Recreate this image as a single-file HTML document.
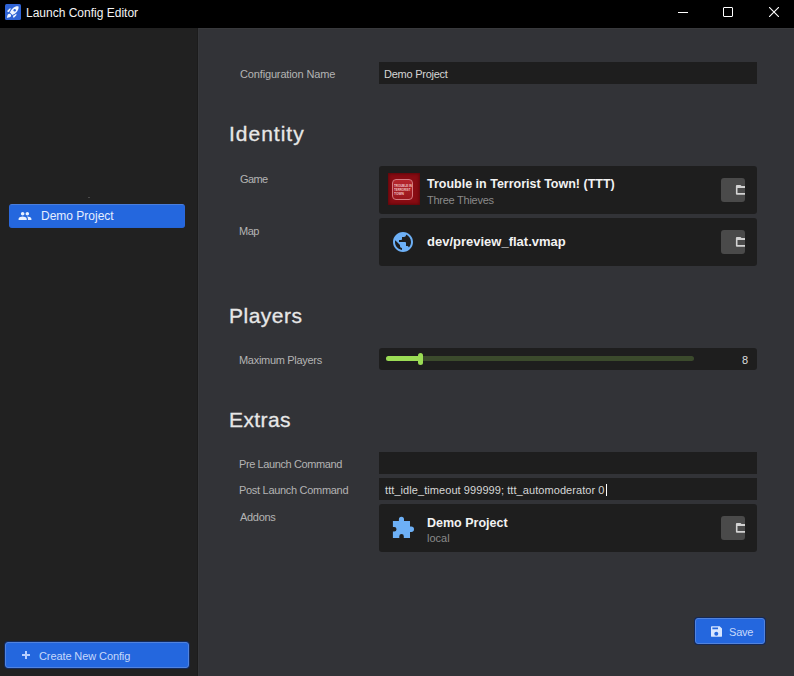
<!DOCTYPE html>
<html><head><meta charset="utf-8">
<style>
*{box-sizing:border-box;margin:0;padding:0}
html,body{width:794px;height:676px;overflow:hidden;background:#323337;font-family:"Liberation Sans",sans-serif}
.abs{position:absolute}
#title{left:0;top:0;width:794px;height:28px;background:#000}
#title .t{left:26px;top:6px;font-size:12px;color:#f4f4f4;white-space:nowrap;line-height:14px}
#side{left:0;top:28px;width:198px;height:648px;background:#212121;border-right:1px solid #1c1c1c}
#main{left:198px;top:28px;width:596px;height:648px;background:#323337;border-top:1px solid #38393c;border-left:1px solid #36373a}
.lbl{font-size:11px;color:#b4b4b4;white-space:nowrap;line-height:13px;letter-spacing:-0.3px}
.inp{left:379px;width:378px;height:22px;background:#1e1e1e}
.inp span{position:absolute;left:5px;top:6px;font-size:11px;line-height:13px;color:#d6d6d6;white-space:nowrap}
.h{font-size:21px;color:#e8e8e8;line-height:24px;white-space:nowrap;-webkit-text-stroke:0.3px #e6e6e6}
.card{left:379px;width:378px;height:48px;background:#1e1e1e;border-radius:3px}
.card .tt{position:absolute;left:48px;font-weight:bold;color:#f2f2f2;white-space:nowrap;font-size:12.5px;line-height:14px}
.card .st{position:absolute;left:48px;color:#8a8a8a;white-space:nowrap;font-size:11px;line-height:13px}
.fbtn{position:absolute;left:342px;width:24px;height:24px;background:#4a4a4a;border-radius:3px;overflow:hidden}
.btn{background:#2467de;border-radius:3px;box-shadow:0 0 0 1px #13295a;border:1px solid #5283dc}
</style></head><body>
<div id="title" class="abs">
  <svg class="abs" style="left:5px;top:4px" width="16" height="16" viewBox="0 0 16 16">
    <rect x="0" y="0" width="16" height="16" rx="1.5" fill="#2f63d4"/>
    <g transform="translate(0.7 0.8) scale(0.6)" fill="#eef5ff"><path d="M9.19,6.35c-2.04,2.290-3.44,5.580-3.57,5.890L2,10.690l4.050-4.050c0.470-0.470,1.150-0.680,1.810-0.550L9.190,6.350z M11.170,17c0,0,3.740-1.550,5.890-3.700c5.400-5.400,4.500-9.620,4.210-10.570c-0.950-0.300-5.170-1.190-10.570,4.210C8.550,9.090,7,12.830,7,12.830L11.170,17z M17.650,14.810c-2.290,2.040-5.580,3.440-5.890,3.570L13.310,22l4.050-4.050c0.470-0.470,0.680-1.150,0.550-1.810L17.650,14.810z M9,18c0,0.830-0.340,1.580-0.880,2.120C6.940,21.300,2,22,2,22s0.700-4.940,1.880-6.120C4.420,15.340,5.170,15,6,15C7.660,15,9,16.340,9,18z"/><circle cx="15" cy="9" r="2" fill="#2f63d4"/></g>
  </svg>
  <div class="abs t">Launch Config Editor</div>
  <div class="abs" style="left:678px;top:12px;width:10px;height:1px;background:#fff"></div>
  <div class="abs" style="left:723px;top:7px;width:10px;height:10px;border:1px solid #fff;border-radius:1px"></div>
  <svg class="abs" style="left:769px;top:7px" width="10" height="10" viewBox="0 0 10 10"><path d="M0 0 L10 10 M10 0 L0 10" stroke="#fff" stroke-width="1.1"/></svg>
</div>

<div id="side" class="abs">
  <div class="abs" style="left:88px;top:169px;width:2px;height:1px;background:#4a4a4a"></div>
  <div class="abs btn" style="left:9px;top:176px;width:176px;height:24px;box-shadow:none;border-color:#2d6ce0 #2a68dc #2565d8 #2a68dc;border-top-color:#4a7edc">
    <svg class="abs" style="left:8px;top:4px" width="14" height="14" viewBox="0 0 24 24"><g transform="translate(0 0) scale(1)"><path fill="#e8f0ff" d="M16 11c1.66 0 2.99-1.34 2.99-3S17.660 5 16 5c-1.660 0-3 1.340-3 3s1.340 3 3 3zm-8 0c1.660 0 2.990-1.340 2.990-3S9.660 5 8 5C6.340 5 5 6.340 5 8s1.340 3 3 3zm0 2c-2.330 0-7 1.170-7 3.500V19h14v-2.500c0-2.330-4.670-3.500-7-3.500zm8 0c-.290 0-.620.020-.970.050 1.160.840 1.970 1.970 1.970 3.450V19h6v-2.500c0-2.330-4.670-3.500-7-3.500z"/></g></svg>
    <div class="abs" style="left:31px;top:4px;font-size:12px;line-height:14px;color:#e6eeff;white-space:nowrap">Demo Project</div>
  </div>
  <div class="abs btn" style="left:5px;top:614px;width:184px;height:26px">
    <div class="abs" style="left:16px;top:8px;width:8px;height:8px">
      <div class="abs" style="left:3px;top:0;width:2px;height:8px;background:#b8d0ff"></div>
      <div class="abs" style="left:0;top:3px;width:8px;height:2px;background:#b8d0ff"></div>
    </div>
    <div class="abs" style="left:33px;top:7px;font-size:11px;line-height:13px;color:#c6d8fb;white-space:nowrap;letter-spacing:-0.1px">Create New Config</div>
  </div>
</div>

<div id="main" class="abs"></div>

<div class="abs lbl" style="left:240px;top:68px;letter-spacing:-0.15px">Configuration Name</div>
<div class="abs inp" style="top:62px"><span style="letter-spacing:-0.25px">Demo Project</span></div>

<div class="abs h" style="left:229px;top:122px;letter-spacing:1px">Identity</div>
<div class="abs lbl" style="left:240px;top:173px;letter-spacing:-0.6px">Game</div>
<div class="abs card" style="top:166px">
  <div class="abs" style="left:9px;top:7px;width:32px;height:32px;background:#880c13;box-shadow:inset 0 0 3px 1px #5e070b"></div>
  <div class="abs" style="left:13px;top:13px;width:21px;height:21px;background:linear-gradient(#b5262d,#9a161d);border:1px solid #d47a80;border-radius:4px"></div>
  <svg class="abs" style="left:15px;top:17px" width="19" height="14" viewBox="0 0 19 14" fill="#f0c4c6" font-family="Liberation Sans Narrow, Liberation Sans" font-weight="bold" font-size="4.4">
    <text x="0" y="4" textLength="18" lengthAdjust="spacingAndGlyphs">TROUBLE IN</text><text x="0" y="8.1" textLength="16.5" lengthAdjust="spacingAndGlyphs">TERRORIST</text><text x="0" y="12.2" textLength="10" lengthAdjust="spacingAndGlyphs">TOWN</text>
  </svg>
  <div class="tt" style="top:11px">Trouble in Terrorist Town! (TTT)</div>
  <div class="st" style="top:28px;letter-spacing:-0.25px">Three Thieves</div>
  <div class="fbtn" style="top:12px"><svg width="24" height="24" viewBox="0 0 24 24"><path fill="#d2d2d2" fill-rule="evenodd" d="M15.9 7 H19.5 L20.5 8.1 H26 V16.8 H15.9 Q14.9 16.8 14.9 15.8 V8 Q14.9 7 15.9 7 Z M16.5 10.1 H26 V14.9 H16.5 Z"/></svg></div>
</div>
<div class="abs lbl" style="left:239px;top:225px;letter-spacing:-0.5px">Map</div>
<div class="abs card" style="top:218px">
  <svg class="abs" style="left:12px;top:12px" width="24" height="24" viewBox="0 0 24 24"><path fill="#6db0f6" d="M12 2C6.48 2 2 6.48 2 12s4.48 10 10 10 10-4.48 10-10S17.52 2 12 2zm-1 17.93c-3.95-.49-7-3.85-7-7.93 0-.62.08-1.21.21-1.79L9 15v1c0 1.1.9 2 2 2v1.93zm6.9-2.54c-.26-.81-1-1.39-1.9-1.39h-1v-3c0-.55-.45-1-1-1H8v-2h2c.55 0 1-.45 1-1V7h2c1.1 0 2-.9 2-2v-.41c2.93 1.19 5 4.06 5 7.41 0 2.08-.8 3.97-2.1 5.39z"/></svg>
  <div class="tt" style="top:17px;font-size:13px">dev/preview_flat.vmap</div>
  <div class="fbtn" style="top:12px"><svg width="24" height="24" viewBox="0 0 24 24"><path fill="#d2d2d2" fill-rule="evenodd" d="M15.9 7 H19.5 L20.5 8.1 H26 V16.8 H15.9 Q14.9 16.8 14.9 15.8 V8 Q14.9 7 15.9 7 Z M16.5 10.1 H26 V14.9 H16.5 Z"/></svg></div>
</div>

<div class="abs h" style="left:229px;top:304px;letter-spacing:0.5px">Players</div>
<div class="abs lbl" style="left:239px;top:354px">Maximum Players</div>
<div class="abs inp" style="top:348px;border-radius:3px">
  <div class="abs" style="left:7px;top:8px;width:308px;height:5px;background:#3b4a2c;border-radius:3px"></div>
  <div class="abs" style="left:7px;top:8px;width:36px;height:5px;background:#9bdc55;border-radius:3px"></div>
  <div class="abs" style="left:39px;top:5px;width:5px;height:12px;background:#9bdc55;border-radius:2.5px"></div>
  <div class="abs" style="left:363px;top:6px;font-size:11px;line-height:13px;color:#dedede">8</div>
</div>

<div class="abs h" style="left:229px;top:408px;letter-spacing:0.4px">Extras</div>
<div class="abs lbl" style="left:239px;top:458px;letter-spacing:-0.4px">Pre Launch Command</div>
<div class="abs inp" style="top:452px"></div>
<div class="abs lbl" style="left:239px;top:484px">Post Launch Command</div>
<div class="abs inp" style="top:478px"><span style="left:6px;top:6px;letter-spacing:0.07px">ttt_idle_timeout 999999; ttt_automoderator 0</span><div class="abs" style="left:227px;top:6px;width:1px;height:12px;background:#fff"></div></div>
<div class="abs lbl" style="left:240px;top:511px">Addons</div>
<div class="abs card" style="top:504px">
  <svg class="abs" style="left:9px;top:8px" width="30" height="30" viewBox="0 0 30 30"><path fill="#6db0f6" d="M4.9 8.9 H10.9 V7.35 A2.55 2.55 0 0 1 16 7.35 V8.9 H22 V14.6 H23.3 A2.7 2.7 0 0 1 23.3 20 H22 V26 H15.8 V24.25 A2.25 2.25 0 0 0 11.3 24.25 V26 H4.9 V19.5 H6.25 A2.25 2.25 0 0 0 6.25 15 H4.9 Z"/></svg>
  <div class="tt" style="top:12px">Demo Project</div>
  <div class="st" style="top:28px">local</div>
  <div class="fbtn" style="top:12px"><svg width="24" height="24" viewBox="0 0 24 24"><path fill="#d2d2d2" fill-rule="evenodd" d="M15.9 7 H19.5 L20.5 8.1 H26 V16.8 H15.9 Q14.9 16.8 14.9 15.8 V8 Q14.9 7 15.9 7 Z M16.5 10.1 H26 V14.9 H16.5 Z"/></svg></div>
</div>

<div class="abs btn" style="left:695px;top:618px;width:70px;height:26px">
  <svg class="abs" style="left:14.8px;top:6.9px" width="11" height="11" viewBox="0 0 10.5 10.1"><path fill="#d8e6ff" fill-rule="evenodd" d="M0.8 0 H8.3 L10.5 2.2 V9.3 Q10.5 10.1 9.7 10.1 H0.8 Q0 10.1 0 9.3 V0.8 Q0 0 0.8 0 Z M1.3 1.3 H6.7 V2.9 H1.3 Z"/><circle cx="5.05" cy="7.3" r="1.9" fill="#2467de"/></svg>
  <div class="abs" style="left:33px;top:7px;font-size:11px;line-height:13px;color:#c6d8fb;letter-spacing:-0.2px">Save</div>
</div>
</body></html>
